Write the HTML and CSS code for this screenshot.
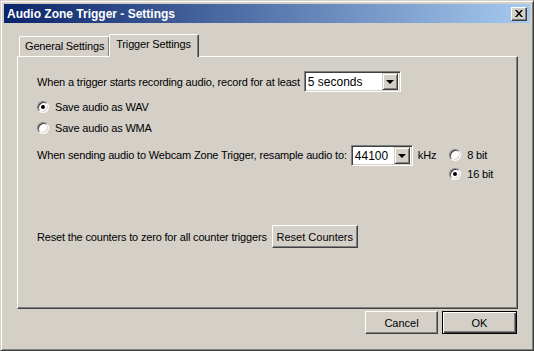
FILE: index.html
```html
<!DOCTYPE html>
<html lang="en">
<head>
    <meta charset="UTF-8">
    <title>Audio Zone Trigger - Settings</title>
    <link rel="stylesheet" href="styles.css">
</head>
<body>
    <div class="window">
        <!-- Title Bar -->
        <div class="title-bar">
            <span class="title-text">Audio Zone Trigger - Settings</span>
            <div class="close-btn">
                <svg width="8" height="7" viewBox="0 0 8 7">
                    <path d="M0 0h2l2 2.5L6 0h2L5 3.5 8 7H6L4 4.5 2 7H0l3-3.5z" fill="#000"/>
                </svg>
            </div>
        </div>

        <div class="dialog-body">
            <!-- Tabs -->
            <div class="tabs">
                <div class="tab">General Settings</div>
                <div class="tab active">Trigger Settings</div>
            </div>

            <!-- Tab Panel -->
            <div class="panel">
                <div class="row">
                    <span>When a trigger starts recording audio, record for at least</span>
                    <div class="combo combo-wide">
                        <span class="combo-value">5 seconds</span>
                        <span class="combo-arrow"><i></i></span>
                    </div>
                </div>

                <div class="radio-row first">
                    <span class="radio checked"></span>
                    <span>Save audio as WAV</span>
                </div>
                <div class="radio-row">
                    <span class="radio"></span>
                    <span>Save audio as WMA</span>
                </div>

                <div class="row resample-row">
                    <span class="line-label">When sending audio to Webcam Zone Trigger, resample audio to:</span>
                    <div class="combo combo-narrow">
                        <span class="combo-value">44100</span>
                        <span class="combo-arrow"><i></i></span>
                    </div>
                    <span class="line-label unit">kHz</span>
                    <div class="bit-group">
                        <div class="radio-row">
                            <span class="radio"></span>
                            <span>8 bit</span>
                        </div>
                        <div class="radio-row">
                            <span class="radio checked"></span>
                            <span>16 bit</span>
                        </div>
                    </div>
                </div>

                <div class="row reset-row">
                    <span>Reset the counters to zero for all counter triggers</span>
                    <button class="btn reset-btn">Reset Counters</button>
                </div>
            </div>

            <!-- Dialog Buttons -->
            <div class="footer">
                <button class="btn">Cancel</button>
                <button class="btn default">OK</button>
            </div>
        </div>
    </div>
</body>
</html>
```

FILE: styles.css
```css
/* General Reset */
* {
    margin: 0;
    padding: 0;
    box-sizing: border-box;
}

body {
    background-color: #d4d0c8;
    color: #000;
    font-family: "Liberation Sans", Arial, sans-serif;
    font-size: 11px;
    letter-spacing: -0.17px;
}

/* Window Frame */
.window {
    width: 534px;
    height: 351px;
    border: 1px solid;
    border-color: #d4d0c8 #404040 #404040 #d4d0c8;
    box-shadow: inset 1px 1px #fff, inset -1px -1px #808080;
    padding: 3px;
    display: flex;
    flex-direction: column;
}

/* Title Bar */
.title-bar {
    height: 19px;
    background: linear-gradient(to right, #0a246a, #a6caf0);
    display: flex;
    align-items: center;
    justify-content: space-between;
    padding: 0 3px 0 3px;
}

.title-text {
    color: #fff;
    font-weight: bold;
    font-size: 12px;
    letter-spacing: 0;
}

.close-btn {
    width: 16px;
    height: 14px;
    background-color: #d4d0c8;
    border: 1px solid;
    border-color: #fff #404040 #404040 #fff;
    box-shadow: inset -1px -1px #808080;
    display: flex;
    align-items: center;
    justify-content: center;
}

/* Dialog Body */
.dialog-body {
    padding: 11px 9px 0 13px;
    display: flex;
    flex-direction: column;
}

/* Tabs */
.tabs {
    display: flex;
    align-items: flex-end;
    height: 22px;
    padding-left: 2px;
}

.tab {
    height: 20px;
    padding: 3px 5px 0 5px;
    border: 1px solid;
    border-bottom: none;
    border-color: #fff #404040 transparent #fff;
    box-shadow: inset -1px 0 #808080;
    border-radius: 2px 2px 0 0;
    white-space: nowrap;
}

.tab.active {
    height: 23px;
    margin-bottom: -1px;
    margin-left: -1px;
    padding: 3px 7px 0 6px;
    background-color: #d4d0c8;
    position: relative;
    z-index: 1;
}

/* Tab Panel */
.panel {
    width: 501px;
    height: 253px;
    border: 1px solid;
    border-color: #fff #404040 #404040 #fff;
    box-shadow: inset -1px -1px #808080;
    padding: 14px 10px 0 19px;
}

.row {
    display: flex;
    align-items: center;
}

.radio-row {
    display: flex;
    align-items: center;
    height: 16px;
    margin-top: 5px;
}

.radio-row.first {
    margin-top: 7px;
}

/* Radio Buttons */
.radio {
    width: 12px;
    height: 12px;
    margin-right: 6px;
    border-radius: 50%;
    border: 1px solid;
    border-color: #808080 #fff #fff #808080;
    background-color: #fff;
    box-shadow: inset 1px 1px #404040, inset -1px -1px #d4d0c8;
    display: flex;
    align-items: center;
    justify-content: center;
}

.radio.checked::after {
    content: "";
    width: 4px;
    height: 4px;
    border-radius: 50%;
    background-color: #000;
}

/* Combo Boxes */
.combo {
    height: 21px;
    margin-left: 4px;
    background-color: #fff;
    border: 1px solid;
    border-color: #808080 #fff #fff #808080;
    box-shadow: inset 1px 1px #404040, inset -1px -1px #d4d0c8;
    display: flex;
    align-items: center;
    justify-content: space-between;
    padding: 2px;
}

.combo-wide {
    width: 97px;
}

.combo-narrow {
    width: 62px;
}

.combo-value {
    padding-left: 1px;
    font-size: 12px;
    letter-spacing: 0;
}

.combo-arrow {
    width: 16px;
    height: 17px;
    background-color: #d4d0c8;
    border: 1px solid;
    border-color: #d4d0c8 #404040 #404040 #d4d0c8;
    box-shadow: inset 1px 1px #fff, inset -1px -1px #808080;
    display: flex;
    align-items: center;
    justify-content: center;
}

.combo-arrow i {
    width: 0;
    height: 0;
    border-left: 4px solid transparent;
    border-right: 4px solid transparent;
    border-top: 4px solid #000;
    margin-left: 1px;
}

/* Resample Row */
.resample-row {
    align-items: flex-start;
    margin-top: 9px;
}

.line-label {
    line-height: 21px;
}

.unit {
    margin-left: 5px;
}

.bit-group {
    margin-left: 13px;
}

.bit-group .radio-row {
    margin-top: 2px;
    margin-bottom: 3px;
}

/* Reset Row */
.reset-row {
    margin-top: 40px;
}

/* Buttons */
.btn {
    height: 23px;
    width: 73px;
    font-family: "Liberation Sans", Arial, sans-serif;
    font-size: 11px;
    letter-spacing: 0;
    color: #000;
    background-color: #d4d0c8;
    border: 1px solid;
    border-color: #fff #404040 #404040 #fff;
    box-shadow: inset -1px -1px #808080;
}

.reset-btn {
    width: 86px;
    margin-left: 5px;
}

.btn.default {
    width: 75px;
    border-color: #000;
    box-shadow: inset 1px 1px #fff, inset -1px -1px #404040, inset -2px -2px #808080;
}

/* Footer */
.footer {
    display: flex;
    justify-content: flex-end;
    gap: 4px;
    margin-top: 2px;
    padding-right: 4px;
}
```
